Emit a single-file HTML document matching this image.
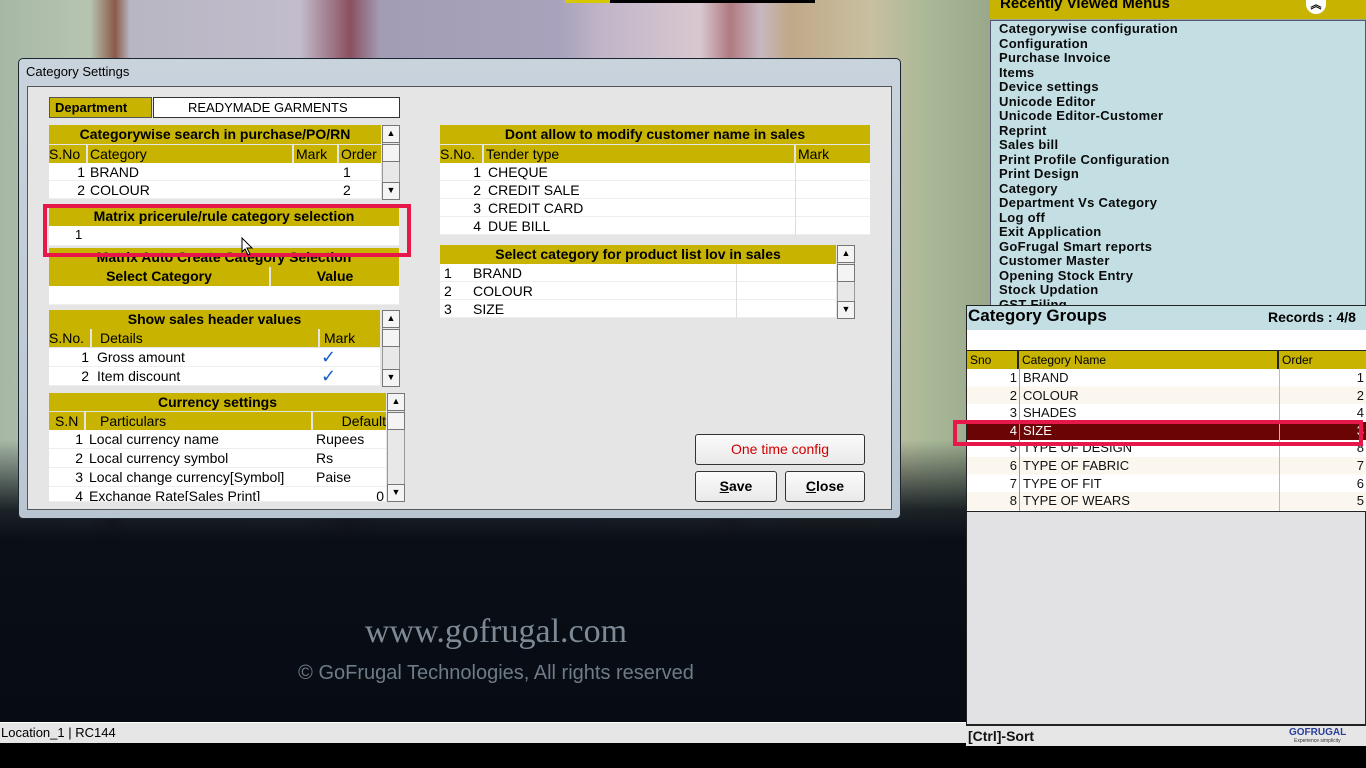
<!DOCTYPE html>
<html><head><meta charset="utf-8"><style>
*{margin:0;padding:0;box-sizing:border-box}
body{width:1366px;height:768px;overflow:hidden;position:relative;background:#000;font-family:"Liberation Sans","DejaVu Sans",sans-serif;}
.a{position:absolute}
.bg{left:0;top:0;width:1366px;height:722px;background:linear-gradient(180deg,rgba(0,0,0,0) 0,rgba(0,0,0,0) 440px,rgba(12,18,26,.9) 510px,#0a0f17 540px,#070b12 722px),linear-gradient(90deg,#a6b8a4 0,#b7c4b2 90px,#8a5a4a 115px,#b8b6c2 130px,#c2bccc 300px,#8a5060 350px,#a29cb4 380px,#a8a2bc 560px,#c0b4c8 600px,#d8c8d0 700px,#b07a80 730px,#c7b7c0 760px,#c0a888 790px,#c8c0a0 870px,#a8b898 930px,#98a888 990px)}
.dlg{left:18px;top:58px;width:883px;height:461px;border:1px solid #1a2530;border-radius:5px;background:linear-gradient(180deg,#c9d3dc,#b9c6d2);}
.dlgt{left:26px;top:64px;font-size:13px;color:#000;}
.cl{left:27px;top:86px;width:865px;height:424px;background:#e5e5e5;border:1px solid #555;}
.y{background:#c7b300;color:#000;font-weight:bold;font-size:14px;text-align:center;line-height:19px;white-space:nowrap;overflow:hidden}
.h{background:#c7b300;color:#000;font-size:14px;line-height:18px;white-space:nowrap;overflow:hidden;border-right:2px solid #e5e5e5}
.w{background:#fff;font-size:14px;line-height:18px;white-space:nowrap;overflow:hidden;color:#000;border-bottom:1px solid #eee}
.r{text-align:right;padding-right:3px}
.sb{background:#e8e8e8;border:1px solid #999;}
.sbb{background:#f4f4f4;border:1px solid #777;font-size:9px;text-align:center;line-height:15px;}
.btn{background:linear-gradient(#fbfbfb,#e9e9e9);border:1px solid #333;border-radius:3px;text-align:center;font-size:14px;line-height:28px}
.rv{left:990px;top:20px;width:376px;height:286px;background:#c3dfe4;border:1px solid #557;}
.rv div{font-weight:bold;font-size:13px;line-height:14.5px;color:#0a0a0a;padding-left:8px;letter-spacing:.3px}
.g{font-size:13px;line-height:17.6px;white-space:nowrap;color:#111;transform-origin:left;}
</style></head><body>
<div class="a bg"></div>
<div class="a" style="left:565px;top:0;width:45px;height:3px;background:#d8c800"></div>
<div class="a" style="left:610px;top:0;width:205px;height:3px;background:#000"></div>

<div class="a dlg"></div>
<div class="a dlgt">Category Settings</div>
<div class="a cl"></div>

<div class="a y" style="left:49px;top:97px;width:103px;height:21px;line-height:19px;border:1px solid #555;font-size:13px;text-align:left;padding-left:5px">Department</div>
<div class="a w" style="left:153px;top:97px;width:247px;height:21px;border:1px solid #333;font-size:13px;padding-left:34px;line-height:19px;">READYMADE GARMENTS</div>

<div class="a y" style="left:49px;top:125px;width:332px;height:19px">Categorywise search in purchase/PO/RN</div>
<div class="a h" style="left:49px;top:145px;width:39px">S.No</div>
<div class="a h" style="left:88px;top:145px;width:206px;padding-left:2px">Category</div>
<div class="a h" style="left:294px;top:145px;width:45px;padding-left:2px">Mark</div>
<div class="a h" style="left:339px;top:145px;width:42px;padding-left:2px;border:0">Order</div>
<div class="a w" style="left:49px;top:163px;width:332px;height:18px"><span class="a r" style="width:39px">1</span><span class="a" style="left:41px">BRAND</span><span class="a" style="left:294px">1</span></div>
<div class="a w" style="left:49px;top:181px;width:332px;height:18px"><span class="a r" style="width:39px">2</span><span class="a" style="left:41px">COLOUR</span><span class="a" style="left:294px">2</span></div>
<div class="a sb" style="left:382px;top:125px;width:18px;height:75px"></div>
<div class="a sbb" style="left:382px;top:125px;width:18px;height:18px">▲</div>
<div class="a sbb" style="left:382px;top:144px;width:18px;height:18px"></div>
<div class="a sbb" style="left:382px;top:182px;width:18px;height:18px">▼</div>

<div class="a y" style="left:49px;top:248px;width:350px;height:19px">Matrix Auto Create Category Selection</div>
<div class="a y" style="left:49px;top:267px;width:222px;height:19px;border-right:2px solid #e5e5e5">Select Category</div>
<div class="a y" style="left:271px;top:267px;width:128px;height:19px">Value</div>
<div class="a w" style="left:49px;top:286px;width:350px;height:19px"></div>

<div class="a y" style="left:49px;top:207px;width:350px;height:19px">Matrix pricerule/rule category selection</div>
<div class="a w" style="left:49px;top:226px;width:350px;height:20px;font-size:13px;padding-left:26px">1</div>
<div class="a" style="left:43px;top:204px;width:368px;height:53px;border:4px solid #e8174a"></div>
<svg class="a" style="left:241px;top:237px" width="14" height="20"><path d="M1 1 L1 15 L4 12 L7 18 L9 17 L6 11 L11 11 Z" fill="#fff" stroke="#000"/></svg>

<div class="a y" style="left:49px;top:310px;width:331px;height:19px">Show sales header values</div>
<div class="a h" style="left:49px;top:329px;width:43px">S.No.</div>
<div class="a h" style="left:92px;top:329px;width:228px;padding-left:8px">Details</div>
<div class="a h" style="left:320px;top:329px;width:60px;padding-left:4px;border:0">Mark</div>
<div class="a w" style="left:49px;top:348px;width:331px;height:19px"><span class="a r" style="width:43px">1</span><span class="a" style="left:48px">Gross amount</span><span class="a" style="left:272px;color:#1560c8;font-size:18px">✓</span></div>
<div class="a w" style="left:49px;top:367px;width:331px;height:19px"><span class="a r" style="width:43px">2</span><span class="a" style="left:48px">Item discount</span><span class="a" style="left:272px;color:#1560c8;font-size:18px">✓</span></div>
<div class="a sb" style="left:382px;top:310px;width:18px;height:77px"></div>
<div class="a sbb" style="left:382px;top:310px;width:18px;height:18px">▲</div>
<div class="a sbb" style="left:382px;top:329px;width:18px;height:18px"></div>
<div class="a sbb" style="left:382px;top:369px;width:18px;height:18px">▼</div>

<div class="a y" style="left:49px;top:393px;width:337px;height:18px;line-height:18px">Currency settings</div>
<div class="a h" style="left:49px;top:412px;width:37px;padding-left:6px">S.N</div>
<div class="a h" style="left:86px;top:412px;width:227px;padding-left:14px">Particulars</div>
<div class="a h" style="left:313px;top:412px;width:73px;text-align:right;border:0">Default</div>
<div class="a w" style="left:49px;top:430px;width:337px;height:19px"><span class="a r" style="width:37px">1</span><span class="a" style="left:40px">Local currency name</span><span class="a" style="left:267px">Rupees</span></div>
<div class="a w" style="left:49px;top:449px;width:337px;height:19px"><span class="a r" style="width:37px">2</span><span class="a" style="left:40px">Local currency symbol</span><span class="a" style="left:267px">Rs</span></div>
<div class="a w" style="left:49px;top:468px;width:337px;height:19px"><span class="a r" style="width:37px">3</span><span class="a" style="left:40px">Local change currency[Symbol]</span><span class="a" style="left:267px">Paise</span></div>
<div class="a w" style="left:49px;top:487px;width:337px;height:15px;line-height:18px"><span class="a r" style="width:37px">4</span><span class="a" style="left:40px">Exchange Rate[Sales Print]</span><span class="a" style="right:2px">0</span></div>
<div class="a sb" style="left:387px;top:393px;width:18px;height:109px"></div>
<div class="a sbb" style="left:387px;top:393px;width:18px;height:18px">▲</div>
<div class="a sbb" style="left:387px;top:412px;width:18px;height:18px"></div>
<div class="a sbb" style="left:387px;top:484px;width:18px;height:18px">▼</div>

<div class="a y" style="left:440px;top:125px;width:430px;height:19px">Dont allow to modify customer name in sales</div>
<div class="a h" style="left:440px;top:145px;width:44px">S.No.</div>
<div class="a h" style="left:484px;top:145px;width:312px;padding-left:2px">Tender type</div>
<div class="a h" style="left:796px;top:145px;width:74px;padding-left:2px;border:0">Mark</div>
<div class="a w" style="left:440px;top:163px;width:430px;height:18px"><span class="a r" style="width:44px">1</span><span class="a" style="left:48px">CHEQUE</span></div>
<div class="a w" style="left:440px;top:181px;width:430px;height:18px"><span class="a r" style="width:44px">2</span><span class="a" style="left:48px">CREDIT SALE</span></div>
<div class="a w" style="left:440px;top:199px;width:430px;height:18px"><span class="a r" style="width:44px">3</span><span class="a" style="left:48px">CREDIT CARD</span></div>
<div class="a w" style="left:440px;top:217px;width:430px;height:18px"><span class="a r" style="width:44px">4</span><span class="a" style="left:48px">DUE BILL</span></div>
<div class="a" style="left:795px;top:163px;width:1px;height:72px;background:#ddd"></div>

<div class="a y" style="left:440px;top:245px;width:396px;height:19px">Select category for product list lov in sales</div>
<div class="a w" style="left:440px;top:264px;width:396px;height:18px"><span class="a" style="left:4px">1</span><span class="a" style="left:33px">BRAND</span></div>
<div class="a w" style="left:440px;top:282px;width:396px;height:18px"><span class="a" style="left:4px">2</span><span class="a" style="left:33px">COLOUR</span></div>
<div class="a w" style="left:440px;top:300px;width:396px;height:18px"><span class="a" style="left:4px">3</span><span class="a" style="left:33px">SIZE</span></div>
<div class="a" style="left:736px;top:264px;width:1px;height:54px;background:#ddd"></div>
<div class="a sb" style="left:837px;top:245px;width:18px;height:74px"></div>
<div class="a sbb" style="left:837px;top:245px;width:18px;height:18px">▲</div>
<div class="a sbb" style="left:837px;top:264px;width:18px;height:18px"></div>
<div class="a sbb" style="left:837px;top:301px;width:18px;height:18px">▼</div>

<div class="a btn" style="left:695px;top:434px;width:170px;height:31px;color:#d00000">One time config</div>
<div class="a btn" style="left:695px;top:471px;width:82px;height:31px;font-weight:bold"><u>S</u>ave</div>
<div class="a btn" style="left:785px;top:471px;width:80px;height:31px;font-weight:bold"><u>C</u>lose</div>

<div class="a" style="left:246px;top:613px;width:500px;text-align:center;font-family:'Liberation Serif',serif;font-size:34px;color:#7d8a96;white-space:nowrap">www.gofrugal.com</div>
<div class="a" style="left:196px;top:662px;width:600px;text-align:center;font-size:20px;color:#6e7c88;white-space:nowrap">© GoFrugal Technologies, All rights reserved</div>

<div class="a" style="left:0;top:722px;width:966px;height:21px;background:#e6e6e6;border-top:1px solid #fff"></div>
<div class="a" style="left:1px;top:725px;font-size:13px;color:#000">Location_1 | RC144</div>

<div class="a y" style="left:990px;top:0;width:376px;height:19px;text-align:left;padding-left:10px;line-height:8px;font-size:15px">Recently Viewed Menus</div>
<div class="a" style="left:1306px;top:0;width:20px;height:14px;background:#fff;border-radius:0 0 10px 10px;font-size:11px;text-align:center;line-height:10px;font-weight:bold">︽</div>
<div class="a rv"><div style="height:1px"></div>
<div>Categorywise configuration</div><div>Configuration</div><div>Purchase Invoice</div><div>Items</div><div>Device settings</div><div>Unicode Editor</div><div>Unicode Editor-Customer</div><div>Reprint</div><div>Sales bill</div><div>Print Profile Configuration</div><div>Print Design</div><div>Category</div><div>Department Vs Category</div><div>Log off</div><div>Exit Application</div><div>GoFrugal Smart reports</div><div>Customer Master</div><div>Opening Stock Entry</div><div>Stock Updation</div><div>GST Filing</div></div>

<div class="a" style="left:966px;top:305px;width:400px;height:441px;background:#e2e2e4;border:1px solid #222"></div>
<div class="a" style="left:967px;top:306px;width:399px;height:24px;background:#c3dfe4"></div>
<div class="a" style="left:968px;top:306px;font-size:17px;font-weight:bold;color:#000">Category Groups</div>
<div class="a" style="left:1268px;top:309px;font-size:14px;font-weight:bold;color:#000;white-space:nowrap">Records : 4/8</div>
<div class="a" style="left:967px;top:330px;width:399px;height:20px;background:#fff"></div>
<div class="a" style="left:967px;top:350px;width:399px;height:162px;background:#fff;border-top:1px solid #222;border-bottom:1px solid #222"></div>
<div class="a h" style="left:967px;top:351px;width:52px;height:18px;font-size:12px;border-right:2px solid #222;padding-left:3px">Sno</div>
<div class="a h" style="left:1019px;top:351px;width:260px;height:18px;font-size:12px;border-right:2px solid #222;padding-left:3px">Category Name</div>
<div class="a h" style="left:1279px;top:351px;width:87px;height:18px;font-size:12px;border:0;padding-left:3px">Order</div>
<div class="a" style="left:967px;top:369px;width:399px;height:142px;background:repeating-linear-gradient(180deg,#fff 0,#fff 17.6px,#fbf7ef 17.6px,#fbf7ef 35.2px)"></div>
<div class="a" style="left:967px;top:422px;width:399px;height:18px;background:#6b0505"></div>
<div class="a" style="left:1019px;top:369px;width:1px;height:142px;background:#999"></div>
<div class="a" style="left:1279px;top:369px;width:1px;height:142px;background:#bbb"></div>
<div class="a" style="left:967px;top:369px;width:399px">
<div class="g" style="position:relative;height:17.6px"><span class="a" style="right:349px">1</span><span class="a" style="left:56px">BRAND</span><span class="a" style="right:2px">1</span></div>
<div class="g" style="position:relative;height:17.6px"><span class="a" style="right:349px">2</span><span class="a" style="left:56px">COLOUR</span><span class="a" style="right:2px">2</span></div>
<div class="g" style="position:relative;height:17.6px"><span class="a" style="right:349px">3</span><span class="a" style="left:56px">SHADES</span><span class="a" style="right:2px">4</span></div>
<div class="g" style="position:relative;height:17.6px;color:#fff"><span class="a" style="right:349px">4</span><span class="a" style="left:56px">SIZE</span><span class="a" style="right:2px">3</span></div>
<div class="g" style="position:relative;height:17.6px"><span class="a" style="right:349px">5</span><span class="a" style="left:56px">TYPE OF DESIGN</span><span class="a" style="right:2px">8</span></div>
<div class="g" style="position:relative;height:17.6px"><span class="a" style="right:349px">6</span><span class="a" style="left:56px">TYPE OF FABRIC</span><span class="a" style="right:2px">7</span></div>
<div class="g" style="position:relative;height:17.6px"><span class="a" style="right:349px">7</span><span class="a" style="left:56px">TYPE OF FIT</span><span class="a" style="right:2px">6</span></div>
<div class="g" style="position:relative;height:17.6px"><span class="a" style="right:349px">8</span><span class="a" style="left:56px">TYPE OF WEARS</span><span class="a" style="right:2px">5</span></div>
</div>
<div class="a" style="left:953px;top:420px;width:410px;height:26px;border:4px solid #e8174a"></div>

<div class="a" style="left:966px;top:724px;width:400px;height:22px;background:#e6e6e6;border-top:2px solid #222"></div>
<div class="a" style="left:968px;top:728px;font-size:14px;font-weight:bold;color:#111">[Ctrl]-Sort</div>
<div class="a" style="left:1289px;top:727px;font-size:10px;font-weight:bold;color:#2a3f9a">GOFRUGAL</div>
<div class="a" style="left:1294px;top:738px;font-size:5px;color:#333">Experience simplicity</div>
</body></html>
